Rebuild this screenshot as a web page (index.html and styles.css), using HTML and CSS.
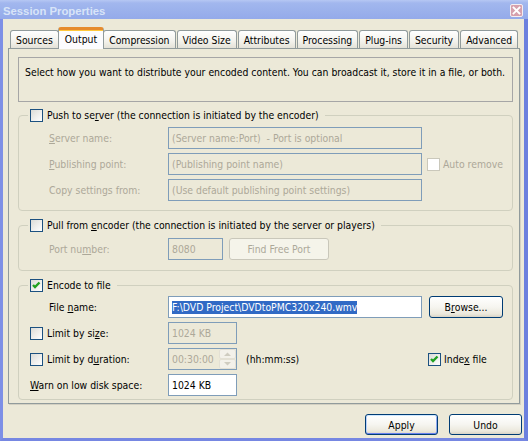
FILE: index.html
```html
<!DOCTYPE html>
<html>
<head>
<meta charset="utf-8">
<title>Session Properties</title>
<link rel="stylesheet" href="styles.css">
</head>
<body>
<div class="window">
  <div class="titlebar">
    <span class="title">Session Properties</span>
    <span class="close"><svg width="11" height="11" viewBox="0 0 11 11"><path d="M2.5 2.5 L8.5 8.5 M8.5 2.5 L2.5 8.5" stroke="#fff" stroke-width="1.8" stroke-linecap="square"/></svg></span>
  </div>
  <div class="frame">
    <div class="tabs">
      <div class="tab">Sources</div>
      <div class="tab active">Output</div>
      <div class="tab">Compression</div>
      <div class="tab">Video Size</div>
      <div class="tab">Attributes</div>
      <div class="tab">Processing</div>
      <div class="tab">Plug-ins</div>
      <div class="tab">Security</div>
      <div class="tab">Advanced</div>
    </div>
    <div class="panel">
      <div class="desc">Select how you want to distribute your encoded content. You can broadcast it, store it in a file, or both.</div>

      <fieldset class="group">
        <legend><span class="cb"></span><span>Push to se<u>r</u>ver (the connection is initiated by the encoder)</span></legend>
        <div class="rows g1">
          <div class="row">
            <span class="lbl dis"><u>S</u>erver name:</span>
            <span class="field dis wide">(Server name:Port)&nbsp; - Port is optional</span>
          </div>
          <div class="row">
            <span class="lbl dis"><u>P</u>ublishing point:</span>
            <span class="field dis wide">(Publishing point name)</span>
            <span class="cb off auto"></span><span class="dis cbtext">Auto remove</span>
          </div>
          <div class="row">
            <span class="lbl dis">Copy settings from:</span>
            <span class="field dis wide">(Use default publishing point settings)</span>
          </div>
        </div>
      </fieldset>

      <fieldset class="group">
        <legend><span class="cb"></span><span>Pull from <u>e</u>ncoder (the connection is initiated by the server or players)</span></legend>
        <div class="rows g2">
          <div class="row">
            <span class="lbl dis">Port nu<u>m</u>ber:</span>
            <span class="field dis port">8080</span>
            <span class="btn disabled findport">Find Free Port</span>
          </div>
        </div>
      </fieldset>

      <fieldset class="group">
        <legend><span class="cb checked"><svg width="11" height="11" viewBox="0 0 11 11"><path d="M2 5 L4 7 L8.5 2.5" fill="none" stroke="#21a121" stroke-width="2.4"/></svg></span><span>Encode to file</span></legend>
        <div class="rows g3">
          <div class="row">
            <span class="lbl ind">File <u>n</u>ame:</span>
            <span class="field wide"><span class="sel">F:\DVD Project\DVDtoPMC320x240.wmv</span></span>
            <span class="btn browse">B<u>r</u>owse...</span>
          </div>
          <div class="row">
            <span class="cblbl"><span class="cb"></span><span>Limit by si<u>z</u>e:</span></span>
            <span class="field dis small">1024 KB</span>
          </div>
          <div class="row">
            <span class="cblbl"><span class="cb"></span><span>Limit by d<u>u</u>ration:</span></span>
            <span class="field dis small spinfield"><span>00:30:00</span>
              <span class="spin">
                <span class="spinbtn"><svg width="7" height="4" viewBox="0 0 7 4"><path d="M0 4 L3.5 0.5 L7 4Z" fill="#cfccc0"/></svg></span>
                <span class="spinbtn"><svg width="7" height="4" viewBox="0 0 7 4"><path d="M0 0 L3.5 3.5 L7 0Z" fill="#cfccc0"/></svg></span>
              </span>
            </span>
            <span class="hint">(hh:mm:ss)</span>
            <span class="cb checked"><svg width="11" height="11" viewBox="0 0 11 11"><path d="M2 5 L4 7 L8.5 2.5" fill="none" stroke="#21a121" stroke-width="2.4"/></svg></span><span class="cbtext">Inde<u>x</u> file</span>
          </div>
          <div class="row">
            <span class="lbl wide-lbl"><u>W</u>arn on low disk space:</span>
            <span class="field small">1024 KB</span>
          </div>
        </div>
      </fieldset>
    </div>
    <div class="buttons">
      <span class="btn default">Apply</span>
      <span class="btn">Undo</span>
    </div>
  </div>
</div>
</body>
</html>
```

FILE: styles.css
```css
* { box-sizing: border-box; }
html, body { margin: 0; padding: 0; }
body {
  width: 528px;
  height: 441px;
  overflow: hidden;
  background: #ece9d8;
  font-family: "DejaVu Sans Condensed", "Liberation Sans", sans-serif;
  font-size: 10.35px;
  color: #000;
}
u { text-decoration: underline; text-underline-offset: 1px; }

.window {
  width: 528px;
  height: 441px;
  display: flex;
  flex-direction: column;
  background: #ece9d8;
}

.titlebar {
  height: 19px;
  flex: none;
  display: flex;
  justify-content: space-between;
  align-items: flex-start;
  padding: 0 5px 0 3px;
  background: linear-gradient(#b6c7f3 0, #a2b7ee 3px, #9cb2ec 50%, #94aaea 100%);
}
.title {
  font-family: "Liberation Sans", sans-serif;
  font-weight: bold;
  font-size: 11.3px;
  line-height: 14px;
  margin-top: 4px;
  color: #d8e4f8;
}
.close {
  width: 13px;
  height: 13px;
  margin-top: 4px;
  border: 1px solid #f4eef2;
  border-radius: 2px;
  background: #d6a0ad;
  display: flex;
  align-items: center;
  justify-content: center;
}
.close svg { display: block; }

.frame {
  flex: 1;
  display: flex;
  flex-direction: column;
  border-left: 3px solid #7d8fe6;
  border-right: 4px solid #6c80de;
  border-bottom: 3px solid #7687e2;
  padding: 8px 0 0 5px;
}

.tabs {
  display: flex;
  align-items: flex-end;
  height: 21px;
  margin-left: 2px;
  gap: 1px;
}
.tab {
  height: 18px;
  padding: 1px 5px 0;
  display: flex;
  align-items: center;
  border: 1px solid #919b9c;
  border-bottom: none;
  border-radius: 3px 3px 0 0;
  background: linear-gradient(#ffffff, #f3f2ec 60%, #e4e2d8);
  white-space: nowrap;
}
.tab.active {
  height: 22px;
  margin: 0 -2px -1px -2px;
  padding: 0 6px 2px;
  position: relative;
  z-index: 1;
  background: #fcfcfe;
  border-top: 3px solid #e68b2c;
  box-shadow: inset 0 1px 0 #ffc83c;
}

.panel {
  flex: none;
  margin-right: 4px;
  border: 1px solid #919b9c;
  box-shadow: 1px 1px 0 #d3d0c2;
  padding: 8px 6px 3px 9px;
  background: #ece9d8;
}

.desc {
  height: 45px;
  border: 1px solid #a6a6a6;
  padding: 8px 6px 0;
  line-height: 13px;
  white-space: nowrap;
}

.group {
  margin: 7px 0 0;
  padding: 0;
  min-width: 0;
  border: 1px solid #d0d0bf;
  border-radius: 4px;
}
.group + .group { margin-top: 8px; }
.group legend {
  margin-left: 9px;
  padding: 0 6px 0 2px;
  height: 13px;
  display: flex;
  align-items: center;
  gap: 4px;
  line-height: 13px;
  white-space: nowrap;
}

.cb {
  flex: none;
  width: 13px;
  height: 13px;
  border: 1px solid #1c5180;
  background: linear-gradient(135deg, #dcdcd7, #ffffff);
  display: flex;
  align-items: center;
  justify-content: center;
}
.cb svg { display: block; }
.cb.off { border-color: #cac8bb; background: #fff; }

.rows {
  display: flex;
  flex-direction: column;
  gap: 4px;
}
.rows.g1 { padding: 5px 0 9px 30px; }
.rows.g2 { padding: 6px 0 10px 30px; }
.rows.g3 { padding: 4px 0 3px 11px; }

.row {
  height: 22px;
  display: flex;
  align-items: center;
  white-space: nowrap;
}
.lbl { flex: none; width: 119px; }
.lbl.ind { width: 138px; padding-left: 19px; }
.lbl.wide-lbl { width: 138px; }
.dis { color: #aca899; }

.cblbl {
  flex: none;
  width: 138px;
  display: flex;
  align-items: center;
  gap: 4px;
}

.field {
  flex: none;
  height: 22px;
  border: 1px solid #7f9db9;
  background: #fff;
  padding: 0 3px;
  display: flex;
  align-items: center;
  overflow: hidden;
}
.field.dis { background: #ece9d8; color: #aca899; }
.field.wide { width: 254px; }
.field.port { width: 55px; }
.field.small { width: 69px; }

.sel { background: #316ac5; color: #fff; line-height: 13px; }

.auto { margin-left: 5px; }
.cbtext { margin-left: 3px; }

.spinfield { justify-content: space-between; padding-right: 0; }
.spin {
  width: 17px;
  height: 20px;
  display: flex;
  flex-direction: column;
}
.spinbtn {
  flex: 1;
  border: 1px solid #e3e0d4;
  border-radius: 2px;
  background: #f3f1ea;
  display: flex;
  align-items: center;
  justify-content: center;
}
.spinbtn svg { display: block; }

.hint { width: 182px; margin-left: 9px; }

.btn {
  flex: none;
  height: 22px;
  border: 1px solid #003c74;
  border-radius: 3px;
  background: linear-gradient(#ffffff, #f6f5f0 50%, #ebe8dc 85%, #d8d3c6);
  display: flex;
  align-items: center;
  justify-content: center;
  white-space: nowrap;
}
.btn.disabled {
  border-color: #c9c7ba;
  background: #f5f4ea;
  color: #aca899;
}
.findport { width: 100px; margin-left: 6px; }
.browse { width: 74px; margin-left: 7px; }

.buttons {
  display: flex;
  justify-content: flex-end;
  gap: 11px;
  margin-top: 10px;
  padding-right: 2px;
}
.buttons .btn { width: 73px; height: 21px; }
.btn.default {
  box-shadow: inset 0 1px 0 #cee7ff, inset 0 -1px 0 #6982ee, inset 1px 0 0 #b9d1fa, inset -1px 0 0 #8fa9f1;
}
```
